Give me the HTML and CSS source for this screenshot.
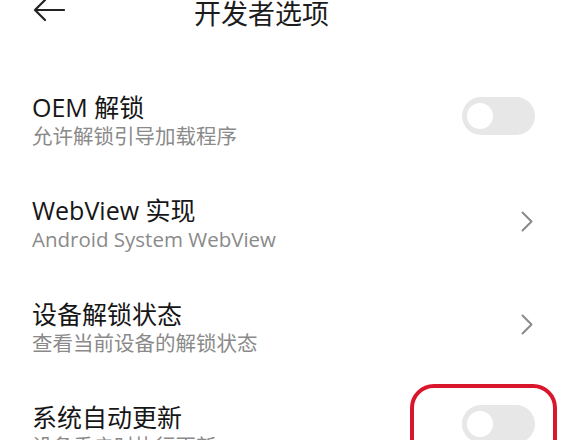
FILE: index.html
```html
<!DOCTYPE html>
<html lang="zh-CN">
<head>
<meta charset="utf-8">
<title>开发者选项</title>
<link rel="stylesheet" href="styles.css">
</head>
<body>
<div class="screen">
  <header class="header">
    <svg class="back" width="32" height="24" viewBox="0 0 32 24">
      <path d="M31 11H2M12 1L2 11l10 10" fill="none" stroke="#222" stroke-width="2.2" stroke-linecap="round" stroke-linejoin="round"/>
    </svg>
    <h1 class="title">开发者选项</h1>
  </header>
  <div class="list">
    <div class="row">
      <div class="text">
        <div class="name">OEM 解锁</div>
        <div class="desc">允许解锁引导加载程序</div>
      </div>
      <div class="toggle toggle-1"><span class="knob"></span></div>
    </div>
    <div class="row">
      <div class="text">
        <div class="name">WebView 实现</div>
        <div class="desc">Android System WebView</div>
      </div>
      <svg class="chev" width="12" height="21" viewBox="0 0 12 21"><path d="M1.5 1.5L10.5 10.5 1.5 19.5" fill="none" stroke="#8a8a8a" stroke-width="2" stroke-linecap="round" stroke-linejoin="round"/></svg>
    </div>
    <div class="row">
      <div class="text">
        <div class="name">设备解锁状态</div>
        <div class="desc">查看当前设备的解锁状态</div>
      </div>
      <svg class="chev" width="12" height="21" viewBox="0 0 12 21"><path d="M1.5 1.5L10.5 10.5 1.5 19.5" fill="none" stroke="#8a8a8a" stroke-width="2" stroke-linecap="round" stroke-linejoin="round"/></svg>
    </div>
    <div class="row row-last">
      <div class="text">
        <div class="name">系统自动更新</div>
        <div class="desc">设备重启时执行更新</div>
      </div>
      <div class="toggle toggle-4"><span class="knob"></span></div>
      <div class="highlight"></div>
    </div>
  </div>
</div>
</body>
</html>
```
FILE: styles.css
```css
html, body {
  margin: 0;
  padding: 0;
  background: #fff;
}
.screen {
  width: 566px;
  height: 440px;
  overflow: hidden;
  font-family: "Open Sans", "Noto Sans CJK SC", sans-serif;
  background: #fff;
}
.header {
  display: flex;
  align-items: center;
  height: 24px;
  padding-left: 33px;
}
.back {
  display: block;
  flex: none;
  margin-top: -2px;
}
.title {
  margin: 0 0 0 129px;
  font-size: 27px;
  font-weight: 400;
  color: #1c1c1c;
  line-height: 22px;
  padding-top: 3px;
}
.list {
  margin-top: 45px;
}
.row {
  position: relative;
  display: flex;
  align-items: center;
  justify-content: space-between;
  height: 103.5px;
  padding: 0 31px 0 32px;
}
.text {
  display: flex;
  flex-direction: column;
}
.name {
  font-size: 25px;
  line-height: 30px;
  color: #161616;
}
.desc {
  font-size: 20.5px;
  line-height: 28px;
  color: #8a8a8a;
}
.toggle {
  position: relative;
  flex: none;
  width: 73px;
  height: 38px;
  border-radius: 19px;
  background: #e7e7e7;
  display: flex;
  align-items: center;
  padding-left: 5px;
  box-sizing: border-box;
}
.toggle-1 { margin-bottom: 10px; }
.toggle-4 { margin-bottom: 14px; }
.knob {
  width: 26px;
  height: 26px;
  border-radius: 50%;
  background: #fff;
}
.chev {
  display: block;
  flex: none;
  margin-right: 2px;
  margin-bottom: 6px;
}
.highlight {
  position: absolute;
  left: 410px;
  top: 4px;
  width: 147px;
  height: 90px;
  box-sizing: border-box;
  border: 4px solid #d8162c;
  border-radius: 24px;
}
```
